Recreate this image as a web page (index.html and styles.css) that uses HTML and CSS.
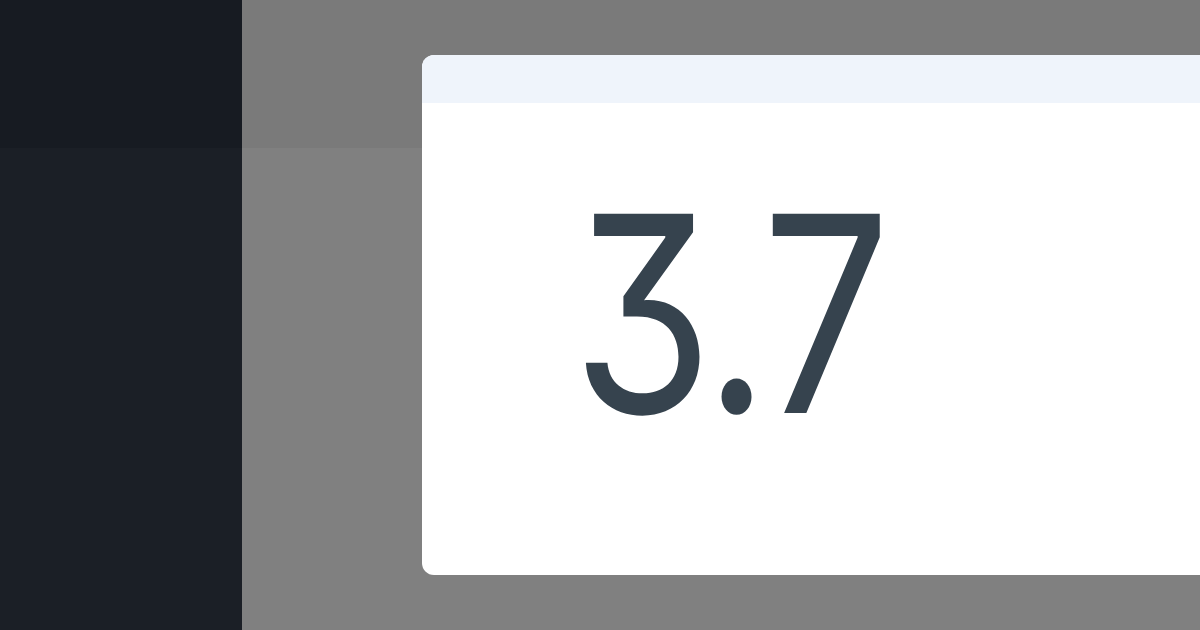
FILE: index.html
```html
<!DOCTYPE html>
<html>
<head>
<meta charset="utf-8">
<link rel="stylesheet" href="styles.css">
</head>
<body>
<div class="app">
  <aside class="sidebar">
    <div class="sidebar-top"></div>
    <div class="sidebar-rest"></div>
  </aside>
  <main class="main">
    <section class="card">
      <div class="card-header"></div>
      <div class="card-body">
        <div class="value">3.7</div>
      </div>
    </section>
  </main>
</div>
</body>
</html>
```
FILE: styles.css
```css
html, body {
  margin: 0;
  padding: 0;
  width: 1200px;
  height: 630px;
  overflow: hidden;
}
.app {
  display: flex;
  width: 1200px;
  height: 630px;
}
.sidebar {
  width: 242px;
  flex: none;
  display: flex;
  flex-direction: column;
}
.sidebar-top {
  height: 148px;
  background: #171b22;
}
.sidebar-rest {
  flex: 1;
  background: #1b1f26;
}
.main {
  flex: 1;
  background: linear-gradient(#7a7a7a 0, #7a7a7a 148px, #808080 148px);
  padding: 55px 0 0 180px;
  overflow: hidden;
}
.card {
  width: 900px;
  height: 520px;
  background: #ffffff;
  border-radius: 12px;
  overflow: hidden;
  display: flex;
  flex-direction: column;
}
.card-header {
  height: 48px;
  background: #eff4fb;
}
.card-body {
  flex: 1;
  padding: 74px 0 0 150px;
}
.value {
  font-family: "Inter", "Noto Sans", sans-serif;
  font-weight: 400;
  font-size: 274px;
  font-feature-settings: "cv09" 1;
  line-height: 1;
  color: #36434e;
  letter-spacing: -5px;
  transform: scaleX(0.83);
  transform-origin: left top;
}
```
